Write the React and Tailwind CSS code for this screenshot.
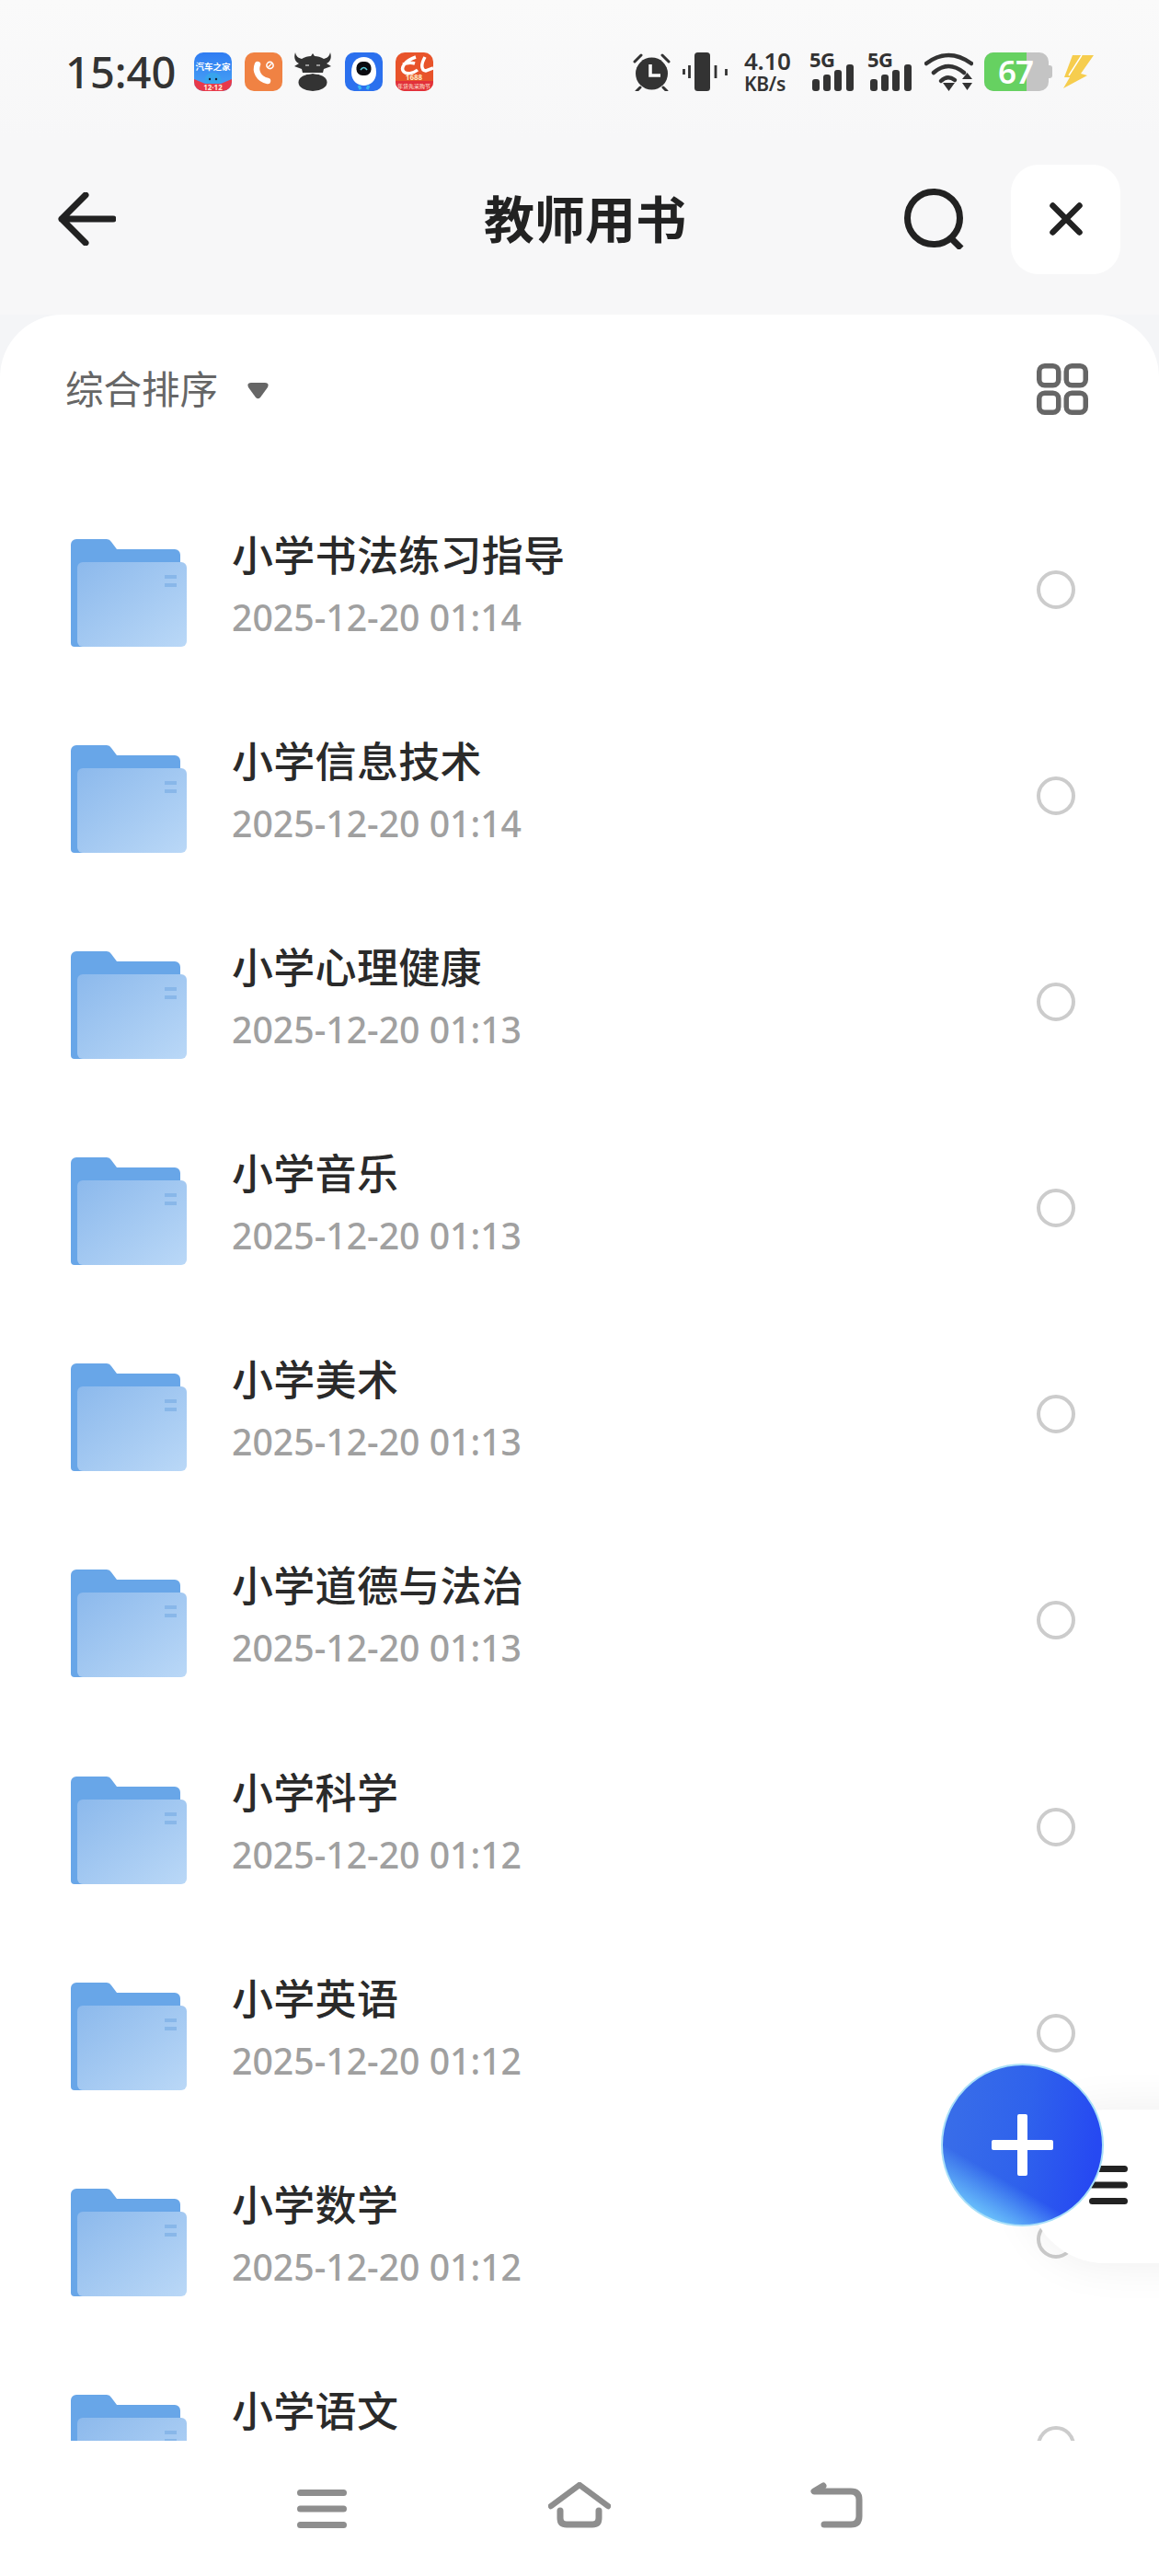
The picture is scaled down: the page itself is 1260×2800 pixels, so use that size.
const rows = [
  ["小学书法练习指导", "2025-12-20 01:14"],
  ["小学信息技术", "2025-12-20 01:14"],
  ["小学心理健康", "2025-12-20 01:13"],
  ["小学音乐", "2025-12-20 01:13"],
  ["小学美术", "2025-12-20 01:13"],
  ["小学道德与法治", "2025-12-20 01:13"],
  ["小学科学", "2025-12-20 01:12"],
  ["小学英语", "2025-12-20 01:12"],
  ["小学数学", "2025-12-20 01:12"],
  ["小学语文", "2025-12-20 01:12"],
];

const sans = "font-['Noto_Sans','Noto_Sans_CJK_SC',sans-serif]";
const cjk = "font-['Noto_Sans_CJK_SC',sans-serif]";

function Folder() {
  return (
    <svg width="126" height="117" viewBox="0 0 126 117" className="shrink-0">
      <defs>
        <linearGradient id="fg" x1="0" y1="0" x2="1" y2="1">
          <stop offset="0" stopColor="#8cb9ec" />
          <stop offset="1" stopColor="#bad8f7" />
        </linearGradient>
      </defs>
      <path d="M0 6a6 6 0 0 1 6-6h33a6 6 0 0 1 5 3l6 8h63a6 6 0 0 1 6 6v94a6 6 0 0 1-6 6H4a4 4 0 0 1-4-4Z" fill="#68a6e8" />
      <rect x="7" y="25" width="119" height="92" rx="6" fill="url(#fg)" />
      <rect x="102" y="39" width="13" height="4" fill="#7fb0e6" opacity="0.75" />
      <rect x="102" y="48" width="13" height="4" fill="#7fb0e6" opacity="0.75" />
    </svg>
  );
}

function Signal() {
  return (
    <div className="relative w-[49px] h-[42px]">
      <span className={`absolute left-0 top-[-6px] text-[22px] leading-[26px] font-bold text-[#333] tracking-[-0.5px] ${sans}`}>5G</span>
      <svg width="49" height="42" viewBox="0 0 49 42" className="absolute left-0 top-0">
        <rect x="3" y="29" width="8" height="13" rx="3" fill="#333" />
        <rect x="15" y="24" width="8" height="18" rx="3" fill="#333" />
        <rect x="27" y="19" width="8" height="23" rx="3" fill="#333" />
        <rect x="40" y="13" width="8" height="29" rx="3" fill="#333" />
      </svg>
    </div>
  );
}

function AppIcons() {
  return (
    <div className="flex items-start ml-[21px]">
      <svg width="41" height="42" viewBox="0 0 41 42">
        <defs>
          <linearGradient id="ah" x1="0" y1="0" x2="0" y2="1">
            <stop offset="0" stopColor="#2f7cf2" />
            <stop offset="1" stopColor="#4aa6f5" />
          </linearGradient>
          <clipPath id="c1"><rect width="41" height="42" rx="10" /></clipPath>
        </defs>
        <g clipPath="url(#c1)">
          <rect width="41" height="42" fill="url(#ah)" />
          <text x="20.5" y="19" textAnchor="middle" fontSize="9.5" fontWeight="700" fill="#fff" fontFamily="Noto Sans CJK SC">汽车之家</text>
          <ellipse cx="20.5" cy="30" rx="9" ry="8" fill="#38a4ec" />
          <path d="M0 29 L12 34 L29 34 L41 29 V42 H0Z" fill="#e8394a" />
          <text x="20.5" y="41" textAnchor="middle" fontSize="8" fontWeight="700" fill="#ffe9d6" fontFamily="Noto Sans">12·12</text>
          <circle cx="17" cy="29" r="1.2" fill="#123" />
          <circle cx="24" cy="29" r="1.2" fill="#123" />
        </g>
      </svg>
      <svg width="41" height="42" viewBox="0 0 41 42" className="ml-[14px]">
        <rect width="41" height="42" rx="10" fill="#f08243" />
        <path d="M14 13 C11 20 15 29 25 31" stroke="#fff" strokeWidth="6.5" fill="none" strokeLinecap="round" />
        <circle cx="27.5" cy="14" r="3.6" stroke="#fff" strokeWidth="1.6" fill="none" />
        <path d="M25.5 16 L29.5 12" stroke="#fff" strokeWidth="1.3" />
      </svg>
      <svg width="42" height="42" viewBox="0 0 42 42" className="ml-[12px]">
        <path d="M2 0 C0 6 2 10 6 12 L1 15 L9 18 L10 22 H32 L33 18 L41 15 L36 12 C40 10 42 6 40 0 C39 4 37 6 33 7 C30 5 26 4 23 4 L21 1 L19 4 C16 4 12 5 9 7 C5 6 3 4 2 0Z" fill="#333" />
        <ellipse cx="21" cy="32.5" rx="15.5" ry="9.5" fill="#333" />
        <path d="M11 24 Q21 21 31 24" stroke="#fafafa" strokeWidth="1" fill="none" />
        <path d="M13 14 H17 M25 14 H29" stroke="#fafafa" strokeWidth="1.2" />
      </svg>
      <svg width="41" height="42" viewBox="0 0 41 42" className="ml-[14px]">
        <rect width="41" height="42" rx="10" fill="#2b70ee" />
        <path d="M7 22 C7 10 13 5 20.5 5 C28 5 34 10 34 22 C34 31 27 36 20.5 36 C14 36 7 31 7 22Z" fill="#fff" />
        <rect x="12.5" y="10" width="16" height="15" rx="6.5" fill="#0b0b10" />
        <path d="M17 19 Q20.5 14 24 19" stroke="#5fd0dc" strokeWidth="1.6" fill="none" />
        <path d="M15 36 L17 40 M26 36 L24 40" stroke="#38b6f0" strokeWidth="3" />
      </svg>
      <svg width="41" height="42" viewBox="0 0 41 42" className="ml-[14px]">
        <defs><clipPath id="c5"><rect width="41" height="42" rx="10" /></clipPath></defs>
        <g clipPath="url(#c5)">
          <rect width="41" height="42" fill="#e8532a" />
          <path d="M22 5 C10 9 5 17 9 21 C12 24 19 23 24 19 M8 13 Q15 10 21 12 M32 5 C28 12 27 19 33 20 L41 17" stroke="#fff" strokeWidth="3.5" fill="none" />
          <rect y="31" width="41" height="11" fill="#e2303a" />
          <text x="20" y="30" textAnchor="middle" fontSize="8" fontWeight="700" fill="#ffe9c0" fontFamily="Noto Sans">1688</text>
          <text x="20" y="39" textAnchor="middle" fontSize="6" fill="#ffe9d6" fontFamily="Noto Sans CJK SC">年货先采购节</text>
        </g>
      </svg>
    </div>
  );
}

function StatusRight() {
  return (
    <div className="flex items-start">
      <svg width="43" height="42" viewBox="0 0 43 42">
        <circle cx="21.5" cy="23" r="17.5" fill="#333" />
        <path d="M3 10 L10 3 M33 3 L40 10 M9 38 L5 42 M34 38 L38 42" stroke="#333" strokeWidth="3" strokeLinecap="round" />
        <path d="M20 13 V25 H31" stroke="#fafafa" strokeWidth="3.6" fill="none" />
      </svg>
      <svg width="49" height="42" viewBox="0 0 49 42" className="ml-[12px]">
        <rect x="13" y="0" width="17" height="42" rx="3.5" fill="#333" />
        <path d="M7.5 14 V28 M1.5 18 V24 M36 14 V28 M47.5 18 V25" stroke="#333" strokeWidth="2.8" />
      </svg>
      <div className={`ml-[18px] w-[54px] text-[#333] font-semibold tracking-[-0.3px] ${sans}`}>
        <div className="text-[26px] leading-[20px] mt-[-1px]">4.10</div>
        <div className="text-[21px] leading-[18px] mt-[6px]">KB/s</div>
      </div>
      <div className="ml-[17px]"><Signal /></div>
      <div className="ml-[14px]"><Signal /></div>
      <svg width="53" height="42" viewBox="0 0 53 42" className="ml-[13px]">
        <path d="M2 12 Q26 -6 51 12" stroke="#333" strokeWidth="4.5" fill="none" strokeLinecap="round" />
        <path d="M10 22 Q26 8 43 22" stroke="#333" strokeWidth="4.5" fill="none" strokeLinecap="round" />
        <path d="M18 31 Q25 24 33 30" stroke="#333" strokeWidth="4.5" fill="none" strokeLinecap="round" />
        <path d="M20 33 H33 L26.5 42Z M41 29 L46.5 22 L52 29Z M41 33 H52 L46.5 41Z" fill="#333" />
      </svg>
      <div className="relative ml-[12px] w-[74px] h-[42px]">
        <div className="absolute left-0 top-0 w-[70px] h-[42px] rounded-[10px] bg-[#c4c4c4]" />
        <div className="absolute right-0 top-[14px] w-[5px] h-[14px] rounded-r-[3px] bg-[#c4c4c4]" />
        <div className="absolute left-0 top-0 w-[46px] h-[42px] rounded-l-[10px] bg-[#66d161]" />
        <div className={`absolute left-[15px] top-0 h-[42px] leading-[42px] text-white text-[35px] font-semibold tracking-[-1px] ${sans}`}>67</div>
      </div>
      <svg width="35" height="36" viewBox="0 0 35 36" className="ml-[10px] mt-[3px]">
        <path d="M12 0 H35 L21 20 L28 22 L2 36 L9 24 L3 24 Z" fill="#f6cd4e" />
        <path d="M22 0 L8 22" stroke="#fff" strokeWidth="1.4" />
      </svg>
    </div>
  );
}

function Row({ title, date }) {
  return (
    <div className="h-[224.1px] shrink-0 flex items-start pl-[77px]">
      <div className="mt-[54px]"><Folder /></div>
      <div className="ml-[49px] mt-[43px]">
        <div className={`text-[45px] leading-[54px] tracking-[0.3px] text-[#2a2a2a] font-medium ${cjk}`}>{title}</div>
        <div className={`mt-[16px] text-[39.2px] leading-[52px] font-medium text-[#a0a0a0] ${sans}`}>{date}</div>
      </div>
      <div className="ml-auto mr-[91px] mt-[88px] w-[42px] h-[42px] rounded-full border-[4px] border-[#cccccc]" />
    </div>
  );
}

export default function App() {
  return (
    <div className="relative w-[1260px] h-[2800px] flex flex-col overflow-hidden bg-[#fafafa]">
      <div className="h-[150px] shrink-0 flex items-start justify-between pt-[57px] pl-[71px] pr-[71px] bg-[linear-gradient(#fafafa,#f7f7f8)]">
        <div className="flex items-start">
          <div className={`w-[119px] text-[47px] leading-[42px] font-medium text-[#333] ${sans}`}>15:40</div>
          <AppIcons />
        </div>
        <StatusRight />
      </div>

      <div className="h-[192px] shrink-0 flex items-center pb-[16px] pl-[63px] pr-[42px] bg-[#f7f7f8]">
        <svg width="63" height="58" viewBox="0 0 63 58">
          <path d="M60 29 H4 M30 3 L4 29 L30 55" stroke="#222" strokeWidth="7" fill="none" strokeLinecap="round" strokeLinejoin="round" />
        </svg>
        <div className={`ml-[400px] mt-[-6px] text-[55px] leading-[64px] font-bold text-[#222] ${cjk}`}>教师用书</div>
        <svg width="66" height="66" viewBox="0 0 66 66" className="ml-auto">
          <circle cx="32" cy="32" r="28.5" stroke="#222" strokeWidth="7" fill="none" />
          <path d="M50 53 L62 65" stroke="#222" strokeWidth="7" />
        </svg>
        <div className="ml-[50px] w-[119px] h-[119px] rounded-[30px] bg-white flex items-center justify-center">
          <svg width="36" height="36" viewBox="0 0 36 36">
            <path d="M3.5 3.5 L32.5 32.5 M32.5 3.5 L3.5 32.5" stroke="#222" strokeWidth="6.5" strokeLinecap="round" />
          </svg>
        </div>
      </div>

      <div className="flex-1 min-h-0 bg-[#f4f5f7]">
        <div className="h-full bg-white rounded-t-[68px] flex flex-col">
          <div className="h-[190px] shrink-0 flex items-start pl-[71px] pr-[77px]">
            <div className={`mt-[50px] text-[41.5px] leading-[58px] text-[#666] ${cjk}`}>综合排序</div>
            <svg width="23" height="18" viewBox="0 0 23 18" className="ml-[32px] mt-[74px]">
              <path d="M4 0 H19 Q24 0 22 5 L14 16 Q11.5 18.500 9 16 L1 5 Q-1 0 4 0Z" fill="#666" />
            </svg>
            <svg width="56" height="56" viewBox="0 0 56 56" className="ml-auto mt-[53px]">
              <g fill="none" stroke="#666" strokeWidth="5.500">
                <rect x="2.75" y="2.75" width="21" height="21" rx="6" />
                <rect x="32.25" y="2.75" width="21" height="21" rx="6" />
                <rect x="2.75" y="32.25" width="21" height="21" rx="6" />
                <rect x="32.25" y="32.25" width="21" height="21" rx="6" />
              </g>
            </svg>
          </div>
          <div className="flex-1 min-h-0 overflow-hidden flex flex-col">
            {rows.map((r) => <Row key={r[0]} title={r[0]} date={r[1]} />)}
          </div>
          <div className="h-[147px] shrink-0 bg-white flex items-start pt-[45px] pl-[323px]">
            <svg width="54" height="50" viewBox="0 0 54 50">
              <path d="M3.5 11.5 H50.5 M3.5 29 H50.5 M3.5 46.5 H50.5" stroke="#8e8e8e" strokeWidth="7" strokeLinecap="round" />
            </svg>
            <svg width="68" height="50" viewBox="0 0 68 50" className="ml-[219px]">
              <path d="M3 26 L34 3 L65 26" stroke="#8e8e8e" strokeWidth="6.5" fill="none" strokeLinecap="round" strokeLinejoin="round" />
              <path d="M13 31 V39 Q13 46 20 46 H48 Q55 46 55 39 V31" stroke="#8e8e8e" strokeWidth="7" fill="none" strokeLinecap="round" />
            </svg>
            <svg width="57" height="50" viewBox="0 0 57 50" className="ml-[217px]">
              <path d="M14 4 L4 10 H44 Q53 10 53 19 V37 Q53 46 44 46 H15" stroke="#8e8e8e" strokeWidth="7" fill="none" strokeLinecap="round" strokeLinejoin="round" />
            </svg>
          </div>
        </div>
      </div>

      <div className="absolute left-[1118px] top-[2293px] w-[200px] h-[167px] rounded-l-[84px] bg-white shadow-[0_0_50px_rgba(0,0,0,0.07)] flex items-center pl-[66px]">
        <svg width="42" height="42" viewBox="0 0 42 42" className="mt-[-4px]">
          <path d="M3.5 3.5 H38.5 M3.5 21 H38.5 M3.5 38.5 H38.5" stroke="#222" strokeWidth="7" strokeLinecap="round" />
        </svg>
      </div>

      <div className="absolute left-[1023px] top-[2243px] w-[177px] h-[177px] rounded-full border-[2px] border-[#a8dff8] bg-[linear-gradient(30deg,#6cc4fc_12%,rgba(80,160,250,0)_32%),linear-gradient(100deg,#3a6fe8_0%,#2f62ec_50%,#2649f2_90%)] flex items-center justify-center">
        <svg width="67" height="67" viewBox="0 0 67 67">
          <path d="M28 2 a2 2 0 0 1 2-2 h7 a2 2 0 0 1 2 2 V28 H65 a2 2 0 0 1 2 2 v7 a2 2 0 0 1-2 2 H39 V65 a2 2 0 0 1-2 2 h-7 a2 2 0 0 1-2-2 V39 H2 a2 2 0 0 1-2-2 v-7 a2 2 0 0 1 2-2 H28Z" fill="#fff" />
        </svg>
      </div>
    </div>
  );
}
